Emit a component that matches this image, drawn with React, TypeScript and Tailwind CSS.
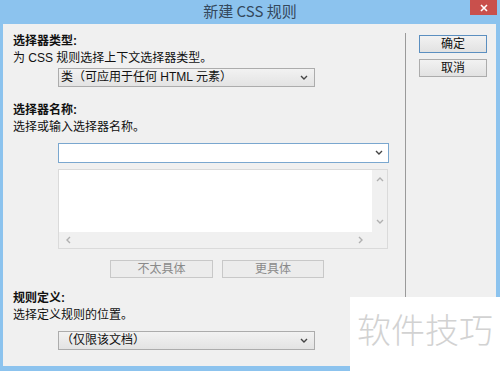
import React from "react";

const Chev = ({ dir = "down", color = "#444" }: { dir?: "down" | "up" | "left" | "right"; color?: string }) => {
  const pts: Record<string, string> = {
    down: "1,2 4,5 7,2",
    up: "1,5 4,2 7,5",
    left: "5,1 2,4 5,7",
    right: "2,1 5,4 2,7",
  };
  return (
    <svg width="8" height="8" viewBox="0 0 8 8">
      <polyline points={pts[dir]} fill="none" stroke={color} strokeWidth="1.4" />
    </svg>
  );
};

const Select = ({ text, w, ml }: { text: string; w: string; ml?: string }) => (
  <div
    className={`${w} h-[19px] ${ml ?? ""} border border-[#acacac] bg-gradient-to-b from-[#f2f2f2] to-[#e3e3e3] flex items-center pl-[2px] pr-[6px]`}
  >
    <span className="flex-1 text-[12px] leading-[17px] text-[#111]">{text}</span>
    <Chev />
  </div>
);

export default function App() {
  const font = { fontFamily: '"Liberation Sans", "Noto Sans CJK SC", sans-serif' };
  return (
    <div className="w-[500px] h-[371px] bg-[#8cc3ee] flex flex-col overflow-hidden relative" style={font}>
      <div className="h-[24px] grid grid-cols-[1fr_auto_1fr] items-start shrink-0">
        <div />
        <div className="text-[15px] leading-[22px] text-[#34485c]" style={{ fontFamily: '"Noto Sans CJK SC", sans-serif' }}>新建 CSS 规则</div>
        <div className="justify-self-end mr-[3px] w-[27px] h-[15px] bg-[#c9504c] flex items-center justify-center">
          <svg width="8" height="8" viewBox="0 0 8 8">
            <path d="M1 1 L7 7 M7 1 L1 7" stroke="#fff" strokeWidth="1.6" />
          </svg>
        </div>
      </div>
      <div className="ml-[3px] mr-[4px] h-[342px] bg-[#f0f0f0] flex shrink-0">
        <div className="w-[402px] pl-[10px] pt-[9px] flex flex-col text-[12px] leading-[17px] text-[#111]">
          <div className="font-bold">选择器类型:</div>
          <div>为 CSS 规则选择上下文选择器类型。</div>
          <Select text="类（可应用于任何 HTML 元素）" w="w-[257px]" ml="ml-[45px] mt-[1px]" />

          <div className="font-bold mt-[15px]">选择器名称:</div>
          <div>选择或输入选择器名称。</div>
          <div className="ml-[45px] mt-[7px] w-[331px] h-[20px] border border-[#7aa7cf] bg-white flex items-center justify-end pr-[5px]">
            <Chev />
          </div>
          <div className="ml-[45px] mt-[6px] w-[330px] h-[80px] border border-[#dadada] bg-[#f0f0f0] flex flex-col">
            <div className="flex flex-1">
              <div className="flex-1 bg-white" />
              <div className="w-[15px] flex flex-col items-center justify-between py-[6px]">
                <Chev dir="up" color="#b0b0b0" />
                <Chev dir="down" color="#b0b0b0" />
              </div>
            </div>
            <div className="h-[16px] flex items-center justify-between pl-[6px] pr-[22px]">
              <Chev dir="left" color="#b0b0b0" />
              <Chev dir="right" color="#b0b0b0" />
            </div>
          </div>
          <div className="ml-[97px] mt-[11px] flex gap-[9px]">
            <div className="w-[103px] h-[18px] border border-[#c8c8c8] bg-[#ececec] flex items-center justify-center text-[#8a8a8a]">不太具体</div>
            <div className="w-[102px] h-[18px] border border-[#c8c8c8] bg-[#ececec] flex items-center justify-center text-[#8a8a8a]">更具体</div>
          </div>

          <div className="font-bold mt-[12px]">规则定义:</div>
          <div>选择定义规则的位置。</div>
          <Select text="（仅限该文档）" w="w-[257px]" ml="ml-[45px] mt-[7px]" />
        </div>
        <div className="w-px bg-[#9a9a9a] mt-[9px] mb-[9px]" />
        <div className="pl-[13px] pt-[11px] flex flex-col gap-[6px]">
          <div className="w-[68px] h-[18px] border border-[#5b8fc0] bg-gradient-to-b from-[#f2f2f2] to-[#e2e2e2] flex items-center justify-center text-[12px] text-[#111]">确定</div>
          <div className="w-[68px] h-[18px] border border-[#acacac] bg-gradient-to-b from-[#f2f2f2] to-[#e2e2e2] flex items-center justify-center text-[12px] text-[#111]">取消</div>
        </div>
      </div>
      <div className="absolute left-[350px] top-[297px] w-[150px] h-[74px] bg-white flex justify-center pt-[14px]">
        <span className="text-[34px] leading-[36px] font-light text-[#d2d2d2]" style={{ fontFamily: '"Noto Sans CJK SC", sans-serif' }}>软件技巧</span>
      </div>
    </div>
  );
}
